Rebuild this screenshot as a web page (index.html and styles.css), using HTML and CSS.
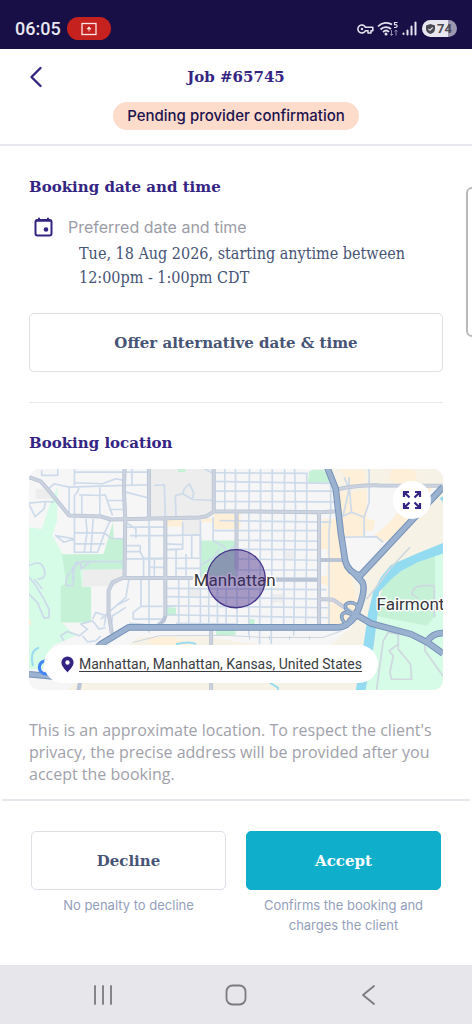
FILE: index.html
```html
<!DOCTYPE html>
<html lang="en">
<head>
  <meta charset="UTF-8">
  <meta name="viewport" content="width=device-width, initial-scale=1.0">
  <title>Job #65745</title>
  <link rel="stylesheet" href="styles.css">
</head>
<body>
  <div class="status-bar">
    <span class="clock">06:05</span>
    <span class="cast">
      <svg width="16" height="14" viewBox="0 0 16 14" fill="none" stroke="#fbe4e2" stroke-width="1.3"><rect x="1" y="1.5" width="14" height="11"/><path d="M8 9.500V6M8 4.800 10 7H6z" fill="#fbe4e2" stroke-width=".8"/></svg>
    </span>
    <div class="status-icons">
      <svg width="17" height="12" viewBox="0 0 17 12" fill="none" stroke="#e4e2ee" stroke-width="1.600" stroke-linejoin="round"><path d="M8.500 4.300A4 4 0 1 0 8.500 7.700H11V10h3V7.700h1.800V4.300z"/><circle cx="5" cy="6" r="1.200" fill="#e4e2ee" stroke="none"/></svg>
      <svg width="22" height="16" viewBox="0 0 22 16" fill="none" stroke="#e4e2ee" stroke-width="1.800"><path d="M1 5.500C5 1.200 11 .800 15 3.500M3.500 8.500C6.500 5.500 11 5.500 14 8M6 11c2-1.700 4.500-1.700 6 0"/><circle cx="9" cy="13" r="1.500" fill="#e4e2ee" stroke="none"/><path d="M20.500 1.500h-3v2.200c3-.7 3.600 2.800.8 2.800h-1.300" stroke-width="1.200"/><path d="M14.500 9v5.500m-1.500-1.500 1.500 1.500 1.500-1.500M19 14.500V9m-1.500 1.500L19 9l1.500 1.500" stroke="#8f8aa8" stroke-width="1"/></svg>
      <svg width="15" height="15" viewBox="0 0 15 15" stroke="#e4e2ee" stroke-width="2" stroke-linecap="round"><path d="M1.500 12.500v.5M5.500 9.500v4M9.500 5.500v8M13.500 1.500v12"/></svg>
      <span class="battery">
        <svg width="9" height="10" viewBox="0 0 9 10"><path d="M4.500 0 9 1.500V5c0 2.500-2 4.200-4.500 5C2 9.200 0 7.500 0 5V1.500z" fill="#4b4a55"/><path d="m2.500 4.800 1.500 1.500 2.700-2.800" fill="none" stroke="#eee" stroke-width="1.100"/></svg>
        74
      </span>
    </div>
  </div>

  <header class="header">
    <div class="header-row">
      <button class="back" aria-label="Back">
        <svg width="14" height="22" viewBox="0 0 14 22" fill="none" stroke="#352583" stroke-width="2.400" stroke-linecap="round" stroke-linejoin="round"><path d="M11.500 2 2.500 11l9 9"/></svg>
      </button>
      <h1>Job #65745</h1>
    </div>
    <span class="badge">Pending provider confirmation</span>
  </header>

  <main class="content">
    <section class="date-section">
      <h2>Booking date and time</h2>
      <div class="preferred">
        <svg width="19" height="20" viewBox="0 0 19 20" fill="none" stroke="#352583" stroke-width="2" stroke-linecap="round"><rect x="1.500" y="3" width="16" height="15.500" rx="2"/><path d="M2 3.800h15M5 1.500V3M14 1.500V3"/><circle cx="12" cy="12.500" r="2.300" fill="#352583" stroke="none"/></svg>
        <span>Preferred date and time</span>
      </div>
      <p class="slot">Tue, 18 Aug 2026, starting anytime between 12:00pm - 1:00pm CDT</p>
      <button class="btn">Offer alternative date &amp; time</button>
    </section>

    <section class="location-section">
      <h2>Booking location</h2>
      <div class="map">
        <svg class="map-art" viewBox="0 0 1239 663" preserveAspectRatio="xMidYMid slice">
          <rect width="1239" height="663" fill="#f6f6f7"/>
          <!-- built-up areas -->
          <path fill="#ededee" d="M361 0H553V125L523 145 361 148zM20 60H60L80 90H20zM458 148H513V195H458zM153 300H283V325L255 352H158zM480 355H510V382H480zM764 248H795V272H764zM725 375H760V400H725z"/>
          <!-- parks -->
          <path fill="#d6fbe7" d="M0 175 38 180 58 120 68 92 86 55 84 155 70 200 103 260 160 260 160 353 98 353V460L140 500 70 530 40 600H0z"/>
          <path fill="#c5f2d7" d="M98 256 223 255 251 160 254 208 286 210V300L153 302 158 353H186V460H95V353L112 340zM513 215H621V340H513zM446 0H468V10H446zM838 8 850 3H880L903 30V42H834zM410 415H440V440H410zM655 450H675V465H655zM560 482H618V498H560zM690 505H732V518H690z"/>
          <path fill="#feefd8" d="M413 150H458V173H413zM516 148H553V160H516zM553 135H633V180H553zM880 150H925L948 300 968 330 992 350 995 410 978 450 960 474H893V350L868 342V320H893V240H873V190zM0 450 6 455 5 470 0 465z"/>
          <!-- east side -->
          <path fill="#f6f2e6" d="M900-3H1239V400L1000 663H110L170 620 330 505 520 500 640 520 900 528 960 480 992 430 960 300 925 100z"/>
          <path fill="#f6f6f7" d="M1013 55H1239L990 320 955 300 930 205 1005 190zM620 480H950L890 530H700L620 512z"/>
          <path fill="#feefd8" d="M925 70 1012 65V150L1036 155 1030 185 1000 188 1003 206 933 205zM935 3H1003L1008 50 960 52zM1086-3H1152L1165 50H1110L1076 32zM1170 55H1207L1185 105 1130 155 1110 205 1053 220 1033 200 1075 165zM350 505 430 502 500 540H390z"/>
          <path fill="#d6fbe7" d="M1239 235 1160 275 1110 310 1080 345 1040 460 1035 520 1000 663H1239z"/>
          <path fill="#c5f2d7" d="M1215 245 1160 275 1110 310 1060 350 1035 440 1190 470 1215 440z"/>
          <path fill="#93dbf0" d="M1239 222 1163 253 1083 288 1053 325 1030 370 1015 430 1003 515 978 663H1007L1033 520 1042 445 1047 370 1085 330 1115 305 1163 280 1239 254zM1229 88 1239 82V100z"/>
          <path fill="none" stroke="#9bdcee" stroke-width="6" d="M30 535Q0 545 12 590M440 525Q480 515 500 525M720 640 745 655V663"/>

          <!-- side streets -->
          <g fill="none" stroke="#cddaea" stroke-width="5" stroke-linejoin="round">
            <path d="M553 12 834 14M553 38 912 44M553 67H914M553 98 914 99M570 155 905 160M553 185H870M621 214 870 217M615 241 870 243M615 270 870 274M615 303 870 303M408 325 870 328M408 358 890 362M408 383 900 390M408 410 900 416M408 437 900 446M440 463 620 465"/>
            <path d="M586 0V130M618 0V130M660 0 658 130V500M693 0V128L690 525M728 0V128L725 525M765 0 762 475M795 0 798 128 792 500M831 13V235L828 475M903 42V125L898 190V245V475M621 145 623 470"/>
            <path d="M448 325V470M478 325V470M513 215V468M538 330V470M564 325V470M590 340V470M470 320V255M513 155V215M551 145V215L585 235 590 270M513 290 553 265 570 240M615 230 600 245"/>
            <path d="M38 5V20H86V0M136 0V50M136 10H283M136 42 220 45 260 30 283 35M58 60 75 45 120 55 286 50 359 48M308 0V50M290 10H359M120 55V140M212 50V138M150 55 145 70 136 80V140M150 78 212 80 228 78 250 140M158 80V140M232 95H283M240 122H283M290 70 355 87M359 148V490"/>
            <path d="M0 103 50 98 75 100M50 98 45 120 18 143 0 105M136 147V250H205L226 192 245 150M170 150 174 190 165 250M192 150 185 250M136 192H226L245 208 286 210M136 210 80 200 105 220 136 210M136 225H226"/>
            <path d="M290 160 320 180V208M288 230H333V250L343 268V323M290 248H333M290 270H400M290 175H408M302 200H460M408 200 513 198M361 175V325M412 225 460 227M412 242 460 240M343 268H513M361 295H408M375 268V325M460 160V240L440 242V325M487 198V270M513 200V260M440 298H513"/>
            <path d="M285 325H335V412H400M335 325V412L312 430V450M405 415 440 410M260 410 300 390M215 450 290 385 300 325M245 492 250 440 290 415M190 450 200 430 230 440 225 470M105 515 95 500 115 487 150 500 175 480 155 465 190 455 210 480 230 475M160 500 175 518 200 515 215 500M300 463 335 465 375 470M312 450H410"/>
            <path d="M0 325Q25 350 60 420V445L45 447 25 400 0 375M15 330 40 360M0 290Q35 270 45 300T25 330M125 310Q105 325 112 350H130Q138 325 130 310T160 278H286M155 280V300L180 280M153 280H140L130 330M197 277h10M375 50 405 48 408 145M440 145 438 80 460 75 490 92 553 95M460 75 465 60 480 45 493 72 490 88M525 0 553 15"/>
            <path d="M943 25 958 60 940 142 965 130 958 45V25M1018 0V100L1003 145 965 130M1003 145V203M933 205 1040 203 1060 220"/>
          </g>
          <g fill="none" stroke="#cfd7df" stroke-width="5">
            <path d="M1060 515 1075 490 1105 495V540L1142 585 1145 630H1085L1080 610 1090 560 1078 545 1105 525M1040 663 1060 515M1145 375Q1150 350 1180 350H1213M1145 375 1165 388M1213 350V445M1239 620 1185 545V525M1140 235 1080 300 1035 360 1010 390"/>
            <path stroke-width="3" d="M310 520 390 500 580 498 700 505H880L935 485"/>
            <path stroke="#b8c4d7" stroke-width="2" d="M660 500v12M720 500v12M780 500v12M840 500v12"/>
          </g>
          <!-- main roads -->
          <g fill="none" stroke="#b9c4d6" stroke-width="12" stroke-linejoin="round">
            <path d="M0 25 35 38 55 60 120 140 215 143 245 152 510 146 532 142 555 127 870 130 915 128M286 0 284 60 288 150 286 323M408 150V440L403 455 385 470M553 0V127M359 0V148M621 130V300M868 130V470M248 493 238 430V365L250 340 280 327H490M545 480V663M870 273H936M735 332H865M868 390 910 392 980 440M920 62Q990 48 1050 50L1239 51M148 663 155 630 160 600"/>
          </g>
          <g fill="none" stroke="#ccd3de" stroke-width="7">
            <path d="M0 25 35 38 55 60 120 140 215 143 245 152 510 146 532 142 555 127 870 130 915 128M286 0 284 60 288 150 286 323M408 150V440M553 0V127M359 0V148M621 130V300M868 130V470M248 493 238 430V365L250 340 280 327H490M545 480V663M868 390 910 392 980 440M920 62Q990 48 1050 50L1239 51"/>
          </g>

          <!-- highways -->
          <path fill="none" stroke="#7692b8" stroke-width="20" stroke-linejoin="round" d="M892-5 918 60 933 190 946 275Q955 310 991 320L1239 55M970 310 998 340Q1010 365 978 440 950 477 920 475H298L215 525 110 625 0 615M968 430 1023 463 1143 495 1193 520 1239 553M1190 518Q1210 490 1239 492"/>
          <path fill="none" stroke="#7692b8" stroke-width="11" d="M978 440C930 420 945 395 970 402S980 430 955 455M958 470C930 455 930 430 950 430L978 440"/>
          <path fill="none" stroke="#9bb1d0" stroke-width="14" stroke-linejoin="round" d="M892-5 918 60 933 190 946 275Q955 310 991 320L1239 55M970 310 998 340Q1010 365 978 440 950 477 920 475H298L215 525 110 625 0 615M968 430 1023 463 1143 495 1193 520 1239 553M1190 518Q1210 490 1239 492"/>
          <path fill="none" stroke="#9bb1d0" stroke-width="6" d="M978 440C930 420 945 395 970 402S980 430 955 455M958 470C930 455 930 430 950 430L978 440"/>

          <path fill="none" stroke="#4285f4" stroke-width="9" d="M56 575A20 20 0 1 0 55 614"/>
          <text class="place" x="493" y="351">Manhattan</text>
          <text class="place" x="1040" y="423">Fairmont</text>
          <circle cx="620" cy="329" r="87" fill="#402585" fill-opacity=".44" stroke="#463489" stroke-width="4"/>
        </svg>
        <button class="expand" aria-label="Expand map">
          <svg width="20" height="20" viewBox="0 0 20 20" fill="none" stroke="#352583" stroke-width="2.200"><path d="M2 7V2h5M2 2l5.500 5.500M13 2h5v5M18 2l-5.500 5.500M2 13v5h5M2 18l5.500-5.500M13 18h5v-5M18 18l-5.500-5.500"/></svg>
        </button>
        <a class="address" href="#">
          <svg width="13" height="17" viewBox="0 0 13 17"><path fill="#352583" fill-rule="evenodd" d="M6.500.500A6 6 0 0 1 12.600 6.600C12.600 10.500 8 14.500 6.500 16.500 5 14.500.400 10.500.400 6.600A6 6 0 0 1 6.500.500zM6.500 4.300a2.200 2.200 0 1 0 0 4.400 2.200 2.200 0 0 0 0-4.400z"/></svg>
          <span>Manhattan, Manhattan, Kansas, United States</span>
        </a>
      </div>
      <p class="note">This is an approximate location. To respect the client's privacy, the precise address will be provided after you accept the booking.</p>
    </section>
  </main>

  <footer class="actions">
    <div class="action">
      <button class="btn">Decline</button>
      <p>No penalty to decline</p>
    </div>
    <div class="action">
      <button class="btn btn-primary">Accept</button>
      <p>Confirms the booking and charges the client</p>
    </div>
  </footer>

  <nav class="system-nav">
    <button aria-label="Recent apps"><svg width="22" height="22" viewBox="0 0 22 22" stroke="#7b7a7e" stroke-width="1.800" stroke-linecap="round"><path d="M3 2v18M11 2v18M19 2v18"/></svg></button>
    <button aria-label="Home"><svg width="22" height="22" viewBox="0 0 22 22" fill="none" stroke="#7b7a7e" stroke-width="1.800"><rect x="1.500" y="1.500" width="19" height="19" rx="6"/></svg></button>
    <button aria-label="Back"><svg width="22" height="22" viewBox="0 0 22 22" fill="none" stroke="#7b7a7e" stroke-width="1.800" stroke-linecap="round" stroke-linejoin="round"><path d="M16 2 5 11l11 9"/></svg></button>
  </nav>

  <div class="edge-panel"></div>
</body>
</html>
```

FILE: styles.css
```css
* { box-sizing: border-box; }
body {
  margin: 0; min-height: 100vh; background: #fff; position: relative;
  display: flex; flex-direction: column; overflow-x: hidden;
  font-family: Inter, "Liberation Sans", sans-serif;
}
h1, h2, p { margin: 0; }
button { font-family: inherit; padding: 0; cursor: pointer; }
svg { display: block; flex: none; }

.status-bar {
  height: 49px; padding: 8px 15px 0; background: #170f45; color: #e9e7f2;
  display: flex; align-items: center; gap: 6px;
}
.clock { font-family: Roboto, sans-serif; font-size: 18px; font-weight: 500; }
.cast {
  width: 44px; height: 23px; border-radius: 12px; background: #c5221f;
  display: flex; align-items: center; justify-content: center;
}
.status-icons { display: flex; align-items: center; gap: 3px; margin-left: auto; }
.battery {
  display: flex; align-items: center; gap: 2px; height: 17px; padding: 0 5px 0 4px; margin-left: 2px;
  border-radius: 9px; background: linear-gradient(90deg, #e8e6ee 74%, #9c98b0 74%);
  color: #4b4a55; font-family: Roboto, sans-serif; font-size: 13px; font-weight: 700;
}

h1, h2, .btn { font-family: "DejaVu Serif", serif; }
h1, h2 { font-size: 15px; line-height: 24px; font-weight: 700; color: #352583; }

.header {
  height: 97px; padding-top: 16px; border-bottom: 2px solid #e8e7ee;
  display: flex; flex-direction: column; align-items: center; gap: 13px;
}
.header-row {
  width: 100%; padding: 0 29px;
  display: grid; grid-template-columns: 24px 1fr 24px; align-items: center; text-align: center;
}
.back { border: 0; background: none; display: flex; }
.badge {
  height: 28px; line-height: 28px; padding: 0 14px; border-radius: 14px;
  background: #fedccb; color: #20124e; font-size: 15px; font-weight: 500;
}

.content { flex: 1; padding: 29px 29px 0; }
.content section { display: flex; flex-direction: column; }
.date-section { padding-bottom: 30px; border-bottom: 1px solid #e8e7ee; }
.preferred {
  display: flex; align-items: center; gap: 15px; margin-top: 16px; padding-left: 5px;
  color: #9b9ca6; font-size: 16px; line-height: 24px;
}
.slot {
  padding: 3px 29px 0 50px; color: #465475;
  font-family: "DejaVu Serif Condensed", "DejaVu Serif", serif; font-size: 16px; line-height: 24px;
}
.btn {
  width: 100%; height: 59px; border: 1px solid #dfdfe8; border-radius: 5px;
  background: #fff; color: #465475; font-size: 15px; font-weight: 700;
}
.date-section .btn { margin-top: 23px; }
.btn-primary { background: #0faecb; border-color: #0faecb; color: #fff; }

.location-section { padding-top: 28px; }
.map { position: relative; height: 221px; margin-top: 14px; border-radius: 10px; overflow: hidden; }
.map-art { width: 100%; height: 100%; }
.place {
  font-family: Roboto, sans-serif; font-size: 51px; fill: #36373b;
  stroke: #fff; stroke-width: 9px; stroke-linejoin: round; paint-order: stroke;
}
.expand {
  position: absolute; top: 12px; right: 12px; width: 38px; height: 38px;
  border: 0; border-radius: 50%; background: #fff;
  display: flex; align-items: center; justify-content: center;
}
.address {
  position: absolute; left: 15px; bottom: 7px; height: 38px; padding: 0 16px 0 17px;
  border-radius: 19px; background: #fff; color: #3c3c42;
  display: flex; align-items: center; gap: 5px;
  font-family: Roboto, sans-serif; font-size: 14px; text-underline-offset: 2px;
}
.note {
  margin-top: 29px; color: #a0a1aa;
  font-family: "Open Sans", sans-serif; font-size: 16px; line-height: 22px;
}

.actions {
  border-top: 2px solid #e8e7ee; margin: 0 2px; padding: 30px 29px 29px;
  display: grid; grid-template-columns: 1fr 1fr; gap: 20px;
}
.action p {
  padding: 5px 8px 1px; text-align: center; color: #94a0bb; font-size: 13px; line-height: 20px;
}

.system-nav {
  height: 59px; background: #e7e6eb; padding: 0 37px;
  display: grid; grid-template-columns: 1fr 1fr 1fr; align-items: center;
}
.system-nav button { border: 0; background: none; display: flex; justify-content: center; }

/* edge handle that lies over the page */
.edge-panel {
  position: absolute; top: 187px; right: -6px; width: 12px; height: 150px;
  border: 2px solid #bababd; border-radius: 6px; background: #fff;
}
```
